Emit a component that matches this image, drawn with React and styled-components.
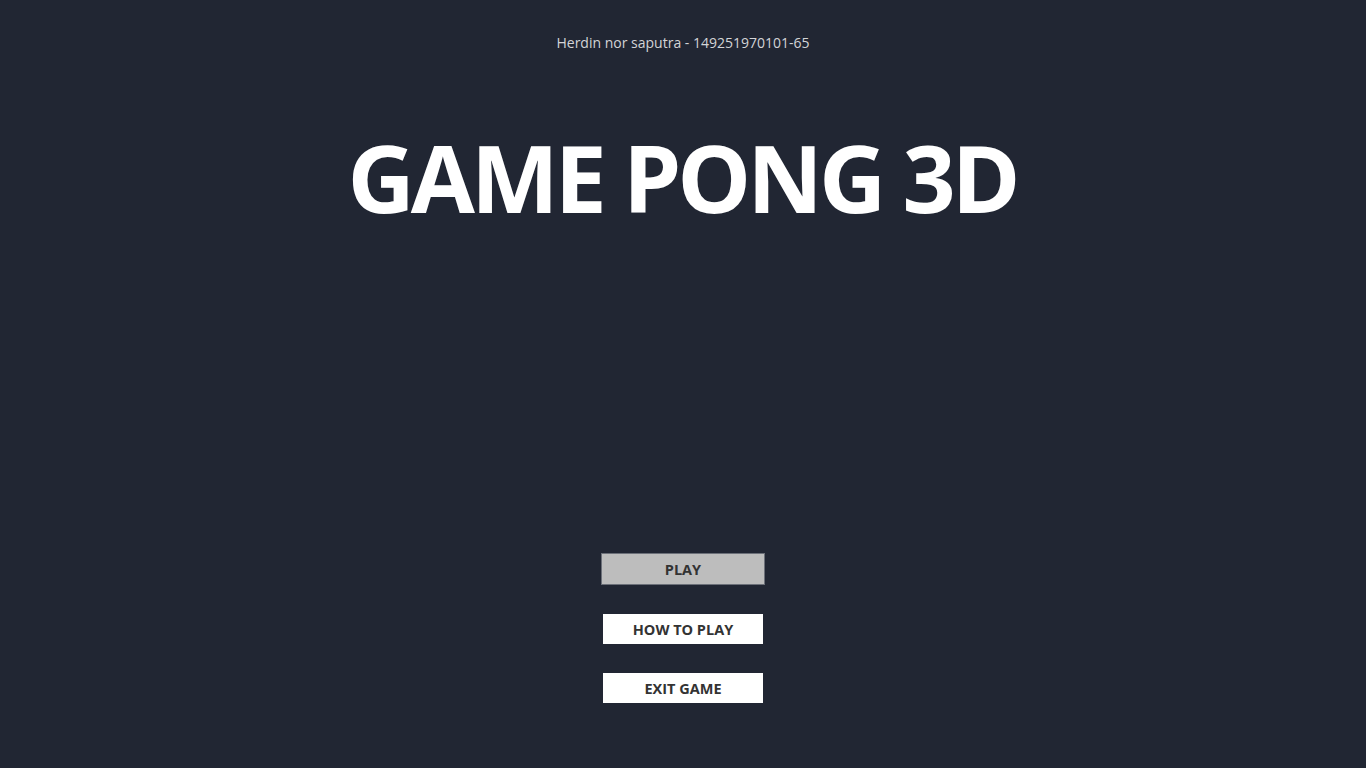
import styled, { createGlobalStyle } from "styled-components";

const Global = createGlobalStyle`
  html, body {
    margin: 0;
    padding: 0;
    background: #212633;
  }
`;

const Screen = styled.main`
  width: 1366px;
  height: 768px;
  background: #212633;
  display: flex;
  flex-direction: column;
  align-items: center;
  font-family: "Open Sans", "Noto Sans", sans-serif;
  overflow: hidden;
`;

const Credit = styled.p`
  margin: 33px 0 0;
  font-size: 14px;
  line-height: 20px;
  color: #d3d4d7;
`;

const Title = styled.h1`
  margin: 69px 0 0 -2px;
  font-size: 93px;
  line-height: 110px;
  font-weight: 700;
  color: #ffffff;
  letter-spacing: -4px;
`;

const Menu = styled.nav`
  margin-top: 321px;
  display: flex;
  flex-direction: column;
  align-items: center;
  gap: 29px;
`;

const Button = styled.button`
  width: ${(p) => (p.$active ? "164px" : "160px")};
  height: ${(p) => (p.$active ? "32px" : "30px")};
  margin: 0;
  padding: 0;
  border: ${(p) => (p.$active ? "1px solid #6c7079" : "none")};
  background: ${(p) => (p.$active ? "#bdbdbd" : "#ffffff")};
  color: #333333;
  font-family: "Open Sans", "Noto Sans", sans-serif;
  font-size: 14.5px;
  font-weight: 700;
  cursor: pointer;
`;

export default function App() {
  return (
    <>
      <Global />
      <Screen>
        <Credit>Herdin nor saputra - 149251970101-65</Credit>
        <Title>GAME PONG 3D</Title>
        <Menu>
          <Button $active>PLAY</Button>
          <Button>HOW TO PLAY</Button>
          <Button>EXIT GAME</Button>
        </Menu>
      </Screen>
    </>
  );
}
